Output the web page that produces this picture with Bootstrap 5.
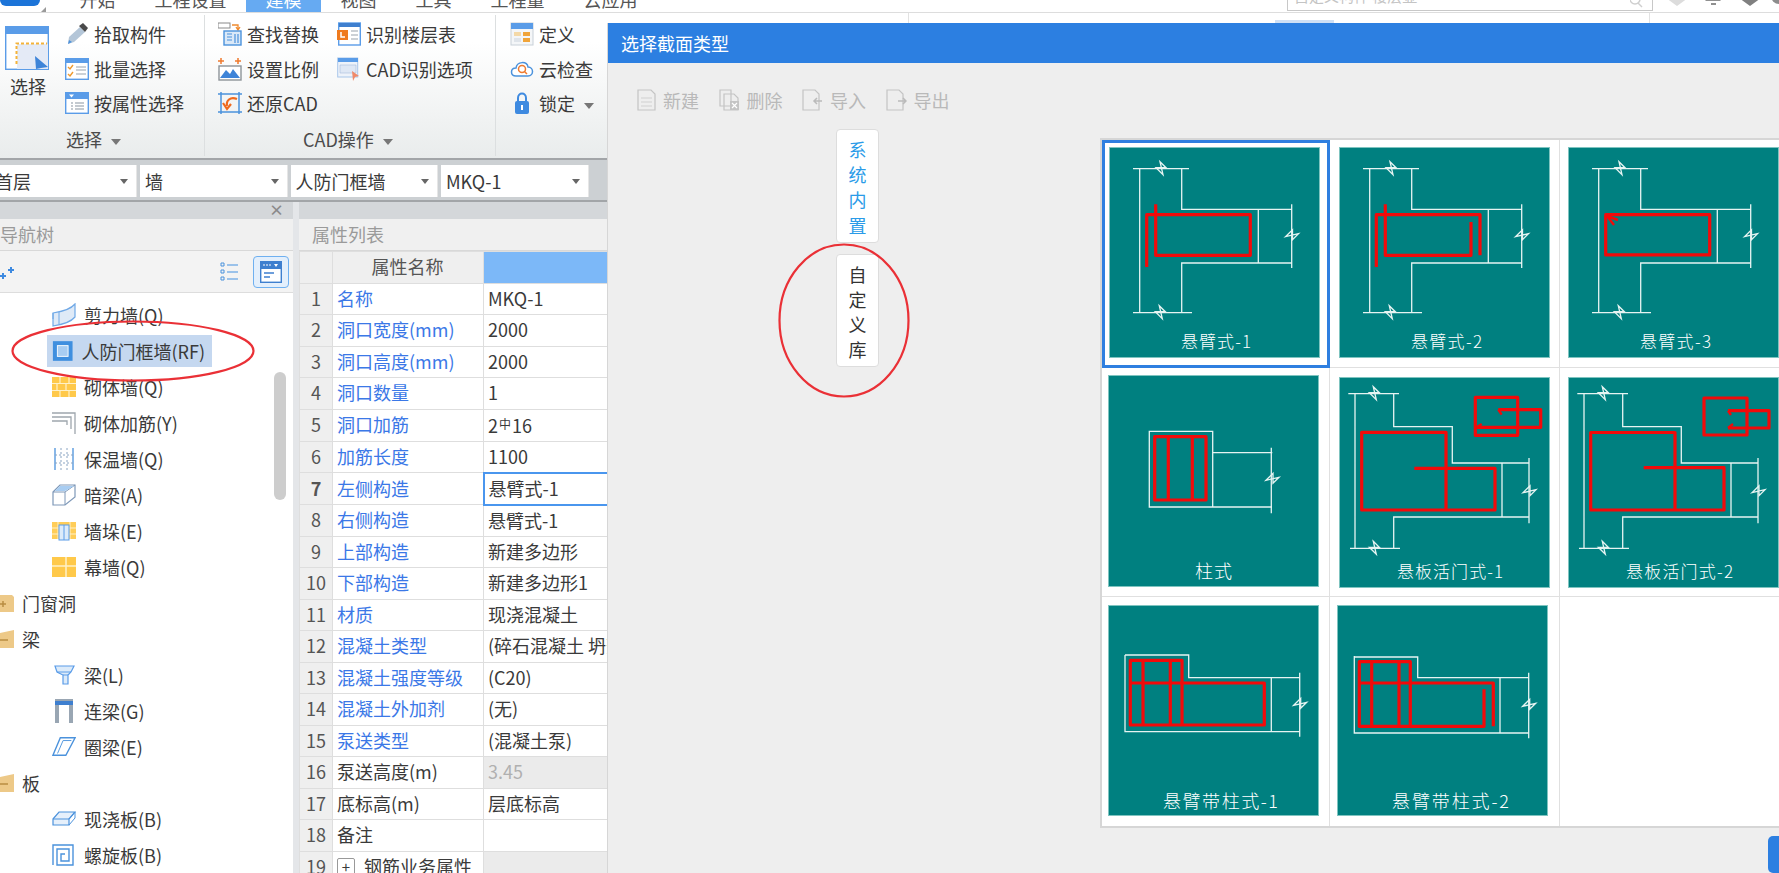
<!DOCTYPE html>
<html lang="zh-CN">
<head>
    <meta charset="UTF-8">
    <title>选择截面类型</title>
    <link href="https://cdn.jsdelivr.net/npm/bootstrap@5.3.0/dist/css/bootstrap.min.css" rel="stylesheet">
    <style>
        body {
            margin: 0;
            width: 1779px;
            height: 873px;
            overflow: hidden;
            position: relative;
            background: #fff;
            color: #3a3a3a;
            font-family: "Noto Sans CJK SC", "Liberation Sans", sans-serif;
            font-size: 18px;
            line-height: 24px;
        }

        /* top tab strip */
        .tabstrip { height: 13px; overflow: hidden; border-bottom: 1px solid #ddd; background: #fff; }
        .logo-box { width: 60px; flex: none; }
        .logo-blue { width: 40px; height: 6px; background: #1c74d8; border-radius: 0 0 8px 8px; }
        .logo-arrow { margin: 1px 0 0 41px; width: 0; height: 0; border-left: 5px solid transparent; border-bottom: 5px solid #9a9a9a; }
        .rtab { padding: 0 19.5px; margin-top: -13px; height: 26px; color: #555; }
        .rtab-on { background: #66aaf2; color: #fff; }
        .searchbox { width: 366px; height: 11px; margin-left: auto; border: 1px solid #c8c8c8; border-top: 0; overflow: hidden; font-size: 15px; line-height: 15px; color: #c4c4c4; padding: 0 8px 0 6px; flex: none; }
        .searchbox span { margin-top: -12px; }
        .top-ico { flex: none; margin-top: -6px; }
        .top-ico-one { margin-left: 12px; }
        .top-ico-two { margin-left: 14px; }
        .top-ico-three { margin-left: 15px; }
        .top-ico-four { margin-left: 8px; }

        /* ribbon */
        .ribbon { height: 145px; background: linear-gradient(#fff 20%, #e9ecec); }
        .rb-group { height: 141px; margin-top: 2px; border-right: 1px solid #dcdfe0; flex: none; }
        .rb-one { width: 205px; }
        .rb-two { width: 291px; padding-left: 13px; }
        .rb-three { width: 111px; padding-left: 14px; border-right: 0; }
        .rb-body { height: 106px; padding-top: 2px; }
        .rb-label { height: 35px; line-height: 36px; color: #4b4b4b; white-space: nowrap; }
        .rb-one .rb-label { padding-left: 66px; }
        .rb-two .rb-label { padding-left: 85px; }
        .rb-big { width: 65px; flex: none; padding: 9px 0 0 5px; }
        .rb-big span { display: block; width: 36px; margin: 4px 0 0 5px; white-space: nowrap; }
        .rb-col-one { width: 119px; flex: none; }
        .rb-item { height: 34.5px; gap: 5px; white-space: nowrap; }
        .rb-item svg { flex: none; }
        .caret-down { display: inline-block; width: 0; height: 0; margin-left: 9px; vertical-align: 2px; border-left: 5px solid transparent; border-right: 5px solid transparent; border-top: 6px solid #777; }
        .rb-rest { height: 10px; flex: none; border-right: 1px solid #e2e2e2; }
        .rb-rest-one { width: 302px; }
        .rb-rest-two { width: 741px; }
        .rb-rest-tab { width: 59px; height: 3px; margin: 7px 0 0 366px; background: #cfe0f5; }

        /* combo row */
        .combobar { height: 44px; background: #ccd0d3; border-top: 2px solid #a2a5a8; border-bottom: 2px solid #a2a5a8; padding-top: 5px; width: 607px; gap: 3px; }
        .combo { height: 32px; width: 147.5px; padding-left: 5px; background: #fff; line-height: 32px; border-right: 1px solid #e6e6e6; }
        .combo-first { width: 147px; margin-left: -10px; }
        .combo i { width: 0; height: 0; margin: 0 8px 0 auto; border-left: 4px solid transparent; border-right: 4px solid transparent; border-top: 5px solid #666; }

        /* panes below the combos */
        .panes { width: 607px; height: 671px; overflow: hidden; background: #e4e6e9; }
        .pane-nav { width: 293px; flex: none; background: #fff; }
        .pane-prop { width: 308px; margin-left: 6px; flex: none; background: #fff; }
        .pane-strip { height: 17px; background: #d4d7da; padding-right: 9px; font-size: 15px; line-height: 16px; color: #8a8a8a; font-weight: 700; }
        .pane-title { height: 32px; line-height: 30px; background: #f0f0f0; color: #9a9a9a; border-bottom: 1px solid #d8d8d8; }
        .pane-title-prop { padding-left: 13px; }
        .nav-tools { height: 42px; background: #f3f3f3; border-bottom: 1px solid #ddd; padding-right: 4px; }
        .nav-tools-on { width: 36px; height: 32px; background: #e3effc; border: 1px solid #6fb0f0; border-radius: 4px; margin-left: 15px; }
        .tree { padding-top: 4px; position: relative; }
        .tree-row { height: 36px; white-space: nowrap; }
        .tree-leaf { padding-left: 52px; gap: 8px; }
        .tree-head { gap: 8px; }
        .tree-sel { background: #c5d8f0; height: 32px; margin-left: 47px; padding: 0 7px 0 5px; gap: 8px; width: 165px; }
        .tree-scroll { position: absolute; right: 7px; top: 79px; width: 12px; height: 128px; background: #cdcdcd; border-radius: 6px; }

        .prop-table { table-layout: fixed; width: 308px; margin: 0; border-collapse: collapse; }
        .prop-table td { padding: 0 5px 2px 4px; height: 31.5px; line-height: 28px; border: 1px solid #dedede; white-space: nowrap; overflow: hidden; color: #3a3a3a; background: #fff; }
        .prop-table td:first-child { text-align: center; padding: 0 0 2px; background: #efefef; color: #555; }
        .prop-table tr td:last-child { padding-left: 4px; border-right: 0; }
        .prop-table .pname { color: #3b78e7; }
        .prop-table .phead { text-align: center; background: #efefef; color: #555; }
        .prop-table .pblue { background: #7cb8f8; }
        .prop-table .pgrey { background: #ebebeb; color: #b0b0b0; }
        .prop-table .pactive-no { background: #7cb8f8; color: #fff; font-weight: 700; }
        .prop-table .pactive { border: 2px solid #4a96ee; padding-left: 8px; }
        .steel { font-size: 12px; vertical-align: 4px; margin: 0 1px; }
        .plus-box { display: inline-block; width: 18px; height: 18px; line-height: 15px; margin: 0 9px 0 0; text-align: center; border: 1px solid #999; border-radius: 2px; font-size: 15px; vertical-align: 1px; }

        /* dialog sits over the main window */
        .dlg { position: absolute; left: 607px; top: 23px; width: 1172px; height: 850px; background: #eee; border-left: 1px solid #d6d6d6; }
        .dlg-head { height: 40px; background: #2c7fe1; color: #fff; line-height: 40px; padding-left: 13px; }
        .dlg-tools { height: 66px; padding: 25px 0 0 27px; color: #b9b9b9; }
        .dlg-tool { width: 83.5px; height: 24px; gap: 7px; flex: none; }
        .lib-tabs { width: 492px; flex: none; padding-left: 228px; gap: 11px; }
        .lib-tab { width: 43px; height: 113.5px; background: #fff; border: 1px solid #ddd; border-radius: 4px; text-align: center; padding-top: 7px; line-height: 25.2px; color: #333; }
        .lib-tab-on { color: #2a9be8; }
        .shape-grid { display: grid; grid-template-columns: 228px 230px 221px; grid-template-rows: 228px 229px 229px; width: 681px; margin-top: 9px; background: #fff; border-top: 2px solid #d6d6d6; border-left: 2px solid #d6d6d6; border-bottom: 2px solid #d6d6d6; }
        .shape-cell { border-right: 1px solid #e0e0e0; border-bottom: 1px solid #e0e0e0; }
        .shape-cell:nth-child(3n) { border-right: 0; padding-left: 8px; }
        .shape-cell:nth-child(n+7) { border-bottom: 0; }
        .shape-cell:nth-child(1) { padding: 7px 0 0 7px; }
        .shape-cell:nth-child(2) { padding: 7px 0 0 9px; }
        .shape-cell:nth-child(3) { padding-top: 7px; }
        .shape-cell:nth-child(4) { padding: 7px 0 0 6px; }
        .shape-cell:nth-child(5) { padding: 9px 0 0 9px; }
        .shape-cell:nth-child(6) { padding-top: 9px; }
        .shape-cell:nth-child(7) { padding: 8px 0 0 6px; }
        .shape-cell:nth-child(8) { padding: 8px 0 0 7px; }
        .shape-cell svg { display: block; }
        .shape-sel { outline: 3px solid #2f7fe0; outline-offset: -3px; }
        .tile-bg { fill: #008080; stroke: #7fc4c0; stroke-width: 1; }
        .wl { fill: none; stroke: #e6f4f2; stroke-width: 1.3; }
        .rb { fill: none; stroke: #f20a0a; stroke-width: 3.2; stroke-linejoin: round; }
        .rbt { fill: none; stroke: #f20a0a; stroke-width: 2.4; }
        .tile-label { fill: #fff; font-family: "Noto Sans CJK SC", sans-serif; font-size: 17px; font-weight: 300; }
        .tile-label-wide { font-size: 18px; }
        .dlg-ok { width: 30px; height: 37px; background: #2c7fe1; border-radius: 5px; margin: 8px 0 0 1160px; }

        .red-ring { position: absolute; fill: none; stroke: #ea3036; stroke-width: 2.2; }
    </style>
</head>
<body>
    <svg width="0" height="0" class="d-block">
        <defs>
            <path id="bh" d="M-1-7 5-1H-5L2 6Z"/>
            <path id="bv" d="M-6 2 1-5V5L7-1Z"/>
            <g id="wall-t" class="wl">
                <path d="M24 21.7H80M30.7 21.7V165.7M72.7 21.7V62.3H182.7M182.7 57.3V121M149.3 62.3V116M72.7 165.7V116H182.7M24 165.7H83"/>
                <use href="#bh" x="52" y="21.7"/><use href="#bh" x="51.3" y="165.7"/><use href="#bv" x="182.5" y="87.7"/>
            </g>
            <g id="wall-slab" class="wl">
                <path d="M9.3 16.7H60M16 16.7V171.3M54.7 16.7V49.7H113.3V86H190M190 81V146.3M163 86V140M54.7 171.3V140H190M11 171.3H61"/>
                <use href="#bh" x="35.3" y="16.7"/><use href="#bh" x="35.3" y="171.3"/><use href="#bv" x="190" y="113.7"/>
            </g>
        </defs>
    </svg>

    <!-- tab strip -->
    <div class="tabstrip d-flex">
        <div class="logo-box"><div class="logo-blue"></div><div class="logo-arrow"></div></div>
        <div class="rtab">开始</div>
        <div class="rtab">工程设置</div>
        <div class="rtab rtab-on">建模</div>
        <div class="rtab">视图</div>
        <div class="rtab">工具</div>
        <div class="rtab">工程量</div>
        <div class="rtab">云应用</div>
        <div class="searchbox d-flex justify-content-between"><span>自定义构件 楼层显</span>
            <svg width="14" height="10" viewBox="0 0 14 10"><circle cx="5" cy="-1" r="5" fill="none" stroke="#cfcfcf" stroke-width="1.500"/><path d="M8 3 12 7" stroke="#cfcfcf" stroke-width="1.500"/></svg>
        </div>
        <svg class="top-ico top-ico-one" width="24" height="14" viewBox="0 0 24 14"><path d="M1 4 12 12 23 4V0H1Z" fill="#dcdcdc"/></svg>
        <svg class="top-ico top-ico-two" width="20" height="14" viewBox="0 0 20 14"><path d="M2 7H18L15 4V0H5V4ZM8 9H13V11H8Z" fill="#909090"/></svg>
        <svg class="top-ico top-ico-three" width="24" height="14" viewBox="0 0 24 14"><path d="M1 0H23V4L12 12 1 4Z" fill="#808080"/></svg>
        <svg class="top-ico top-ico-four" width="9" height="14" viewBox="0 0 9 14"><circle cx="9" cy="2" r="8" fill="#8c8c8c"/></svg>
    </div>

    <!-- ribbon -->
    <div class="ribbon d-flex">
        <div class="rb-group rb-one">
            <div class="rb-body d-flex">
                <div class="rb-big">
                    <svg width="44" height="44" viewBox="0 0 44 44">
                        <rect x=".7" y=".7" width="42.6" height="42.6" fill="#fff" stroke="#5a9ce8" stroke-width="1.4"/>
                        <rect x="1" y="1" width="42" height="7" fill="#5a9ce8"/>
                        <rect x="12" y="18" width="31" height="25" fill="#e4eaf6"/>
                        <path d="M11.500 38V17.500H42" fill="none" stroke="#f4b33a" stroke-width="2" stroke-dasharray="3 2"/>
                        <path d="M30 30 43 41 36 42 31 43Z" fill="#3e84d8"/>
                    </svg>
                    <span>选择</span>
                </div>
                <div>
                    <div class="rb-item d-flex align-items-center">
                        <svg width="24" height="24" viewBox="0 0 24 24"><path d="M3 22 4 15 15 5 20 10 9 20Z" fill="#b4c6d8"/><path d="M3 22 4 18 7 20Z" fill="#4d92dc"/><path d="M14 4 18 1 23 6 20 10Z" fill="#4a4a4a"/></svg>
                        <span>拾取构件</span>
                    </div>
                    <div class="rb-item d-flex align-items-center">
                        <svg width="24" height="24" viewBox="0 0 24 24"><rect x=".7" y="1.700" width="22.600" height="20.600" fill="#fff" stroke="#5a9ce8" stroke-width="1.4"/><rect x="1" y="2" width="22" height="4" fill="#5a9ce8"/><path d="M3 10 5 12 8 8M3 17 5 19 8 15" fill="none" stroke="#ef9a2e" stroke-width="1.400"/><path d="M11 10H21M11 13H21M11 17H21" stroke="#9aa4ae" stroke-width="1.200"/></svg>
                        <span>批量选择</span>
                    </div>
                    <div class="rb-item d-flex align-items-center">
                        <svg width="24" height="24" viewBox="0 0 24 24"><rect x=".7" y="1.700" width="22.600" height="20.600" fill="#fff" stroke="#5a9ce8" stroke-width="1.4"/><rect x="1" y="2" width="22" height="6" fill="#5a9ce8"/><path d="M4 3.500H9L6.500 6.500Z" fill="#fff"/><path d="M6 12H8M6 15H8M6 18H8M10 12H19M10 15H19M10 18H19" stroke="#8a96a2" stroke-width="1.200"/></svg>
                        <span>按属性选择</span>
                    </div>
                </div>
            </div>
            <div class="rb-label">选择<span class="caret-down"></span></div>
        </div>

        <div class="rb-group rb-two">
            <div class="rb-body d-flex">
                <div class="rb-col-one">
                    <div class="rb-item d-flex align-items-center">
                        <svg width="24" height="24" viewBox="0 0 24 24"><rect x="0" y="1" width="12" height="5" fill="#fff" stroke="#8a8a8a"/><path d="M14 3H20V7M18 5 20 8 22 5" fill="none" stroke="#ef8a2e" stroke-width="1.300"/><rect x="6" y="9" width="17" height="14" fill="#dbe9f8" stroke="#4b92dc" stroke-width="1.400"/><path d="M9 12H14M9 15H14M9 18H14M17 12V21M20 12V21" stroke="#4b92dc" stroke-width="1.200"/></svg>
                        <span>查找替换</span>
                    </div>
                    <div class="rb-item d-flex align-items-center">
                        <svg width="24" height="24" viewBox="0 0 24 24"><path d="M3 1V7M0 4H6M20 1V7M17 4H23" fill="none" stroke="#ef7a2e" stroke-width="1.500"/><rect x="1" y="9" width="22" height="14" fill="#fff" stroke="#8e9499" stroke-width="1.400"/><path d="M2 21 8 13 12 17 15 12 22 21Z" fill="#3e84d8"/></svg>
                        <span>设置比例</span>
                    </div>
                    <div class="rb-item d-flex align-items-center">
                        <svg width="24" height="24" viewBox="0 0 24 24"><path d="M3 1V23M21 1V23M0 3H24M0 21H24" stroke="#4b92dc" stroke-width="1.500"/><path d="M19 8C12 5 8 10 9 15M5 12 9 18 13 13" fill="none" stroke="#ef6a1e" stroke-width="2.200"/></svg>
                        <span>还原CAD</span>
                    </div>
                </div>
                <div>
                    <div class="rb-item d-flex align-items-center">
                        <svg width="24" height="24" viewBox="0 0 24 24"><rect x="1.700" y="1" width="21.600" height="22" fill="#fff" stroke="#5a9ce8" stroke-width="1.400"/><rect x="2" y="1" width="21" height="4" fill="#3e7fcf"/><rect x="0" y="8" width="11" height="10" fill="#ef7a1e"/><path d="M4 10V15H8" fill="none" stroke="#fff" stroke-width="1.500"/><path d="M14 9H21M14 13H21M14 17H21" stroke="#9aa4ae" stroke-width="1.200"/></svg>
                        <span>识别楼层表</span>
                    </div>
                    <div class="rb-item d-flex align-items-center">
                        <svg width="24" height="24" viewBox="0 0 24 24"><rect x=".7" y="1" width="20" height="19" fill="#eef3fa" stroke="#a8c6ea"/><rect x="1" y="1" width="20" height="4" fill="#5a9ce8"/><path d="M3 8H19V16H3Z" fill="#dfe8f5" stroke="#a8bedc" stroke-width=".6"/><path d="M15 14 22 19 18 20 16 24Z" fill="#f08a6a"/></svg>
                        <span>CAD识别选项</span>
                    </div>
                </div>
            </div>
            <div class="rb-label">CAD操作<span class="caret-down"></span></div>
        </div>

        <div class="rb-group rb-three">
            <div class="rb-body">
                <div class="rb-item d-flex align-items-center">
                    <svg width="24" height="24" viewBox="0 0 24 24"><rect x="1" y="1" width="22" height="22" fill="#f4f6f8" stroke="#c8d0d8"/><rect x="1" y="1" width="22" height="6" fill="#5a9ce8"/><rect x="4" y="10" width="7" height="4" fill="#f4d9a8"/><rect x="13" y="10" width="7" height="4" fill="#f0a43a"/><rect x="4" y="16" width="7" height="4" fill="#dfe4ea"/><rect x="13" y="16" width="7" height="4" fill="#f0a43a"/></svg>
                    <span>定义</span>
                </div>
                <div class="rb-item d-flex align-items-center">
                    <svg width="24" height="24" viewBox="0 0 24 24"><path d="M6 19C0 19 0 11 6 11 7 4 17 4 18 10 24 10 24 19 18 19Z" fill="#fff" stroke="#4b92dc" stroke-width="1.500"/><circle cx="12" cy="12" r="3.500" fill="none" stroke="#ef7a2e" stroke-width="1.500"/><path d="M14.500 14.500 17 17" stroke="#ef7a2e" stroke-width="1.500"/></svg>
                    <span>云检查</span>
                </div>
                <div class="rb-item d-flex align-items-center">
                    <svg width="24" height="24" viewBox="0 0 24 24"><path d="M8 10V7C8 1 16 1 16 7V10" fill="none" stroke="#3e8ae0" stroke-width="2"/><rect x="5" y="10" width="14" height="13" rx="2" fill="#3e8ae0"/><rect x="11" y="14" width="2" height="5" fill="#fff"/></svg>
                    <span>锁定<span class="caret-down"></span></span>
                </div>
            </div>
            <div class="rb-label"></div>
        </div>
        <div class="rb-rest rb-rest-one"></div>
        <div class="rb-rest rb-rest-two"><div class="rb-rest-tab"></div></div>
    </div>

    <!-- combo row -->
    <div class="combobar d-flex">
        <div class="combo combo-first d-flex align-items-center">首层<i></i></div>
        <div class="combo d-flex align-items-center">墙<i></i></div>
        <div class="combo d-flex align-items-center">人防门框墙<i></i></div>
        <div class="combo d-flex align-items-center">MKQ-1<i></i></div>
    </div>

    <div class="panes d-flex">
        <!-- navigation tree -->
        <div class="pane-nav">
            <div class="pane-strip text-end">×</div>
            <div class="pane-title">导航树</div>
            <div class="nav-tools d-flex align-items-center justify-content-end">
                <svg class="me-auto" width="16" height="16" viewBox="0 0 16 16"><path d="M3 9V15M0 12H6M11 3V9M8 6H14" stroke="#3e8ae0" stroke-width="2"/></svg>
                <svg width="18" height="20" viewBox="0 0 18 20"><path d="M7 3H18M7 10H18M7 17H18" stroke="#7fb2e8" stroke-width="1.300"/><path d="M1 1H4V4H1ZM1 8H4V11H1ZM1 15H4V18H1Z" fill="none" stroke="#4b92dc"/></svg>
                <div class="nav-tools-on d-flex align-items-center justify-content-center">
                    <svg width="22" height="22" viewBox="0 0 22 22"><rect x=".7" y=".7" width="20.600" height="20.600" fill="#fff" stroke="#3e7fcf" stroke-width="1.400"/><rect x="1" y="1" width="20" height="7" fill="#3e7fcf"/><path d="M4 3V5M7 3V5M10 3V5" stroke="#fff"/><path d="M14 3H18L16 6Z" fill="#fff"/><path d="M4 12H14M4 16H10" stroke="#3e7fcf" stroke-width="1.400"/></svg>
                </div>
            </div>
            <div class="tree">
                <div class="tree-row tree-leaf d-flex align-items-center">
                    <svg width="24" height="24" viewBox="0 0 24 24"><path d="M1 10C8 9 18 7 23 1V14C18 20 8 22 1 23Z" fill="#dfeaf7" stroke="#6fa8e6" stroke-width="1.200"/><path d="M1 10V16M7 9V21" stroke="#6fa8e6"/></svg>
                    <span>剪力墙(Q)</span>
                </div>
                <div class="tree-row d-flex align-items-center">
                    <div class="tree-sel d-flex align-items-center">
                        <svg width="24" height="24" viewBox="0 0 24 24"><rect x="1" y="1" width="22" height="22" fill="#3f8fdf"/><rect x="6" y="6" width="12" height="12" fill="#a8cdf2" stroke="#fff" stroke-width="1"/></svg>
                        <span>人防门框墙(RF)</span>
                    </div>
                </div>
                <div class="tree-row tree-leaf d-flex align-items-center">
                    <svg width="24" height="20" viewBox="0 0 24 20"><rect width="24" height="20" fill="#ffc94a"/><path d="M0 6.500H24M0 13.500H24M8 0V6.500M17 0V6.500M5 6.500V13.500M14 6.500V13.500M8 13.500V20M17 13.500V20" stroke="#fff1c8" stroke-width="1.200"/></svg>
                    <span>砌体墙(Q)</span>
                </div>
                <div class="tree-row tree-leaf d-flex align-items-center">
                    <svg width="24" height="24" viewBox="0 0 24 24"><path d="M0 2H23V23M0 6H19V18M0 10H15V14" fill="none" stroke="#9ea6ad" stroke-width="1.300"/></svg>
                    <span>砌体加筋(Y)</span>
                </div>
                <div class="tree-row tree-leaf d-flex align-items-center">
                    <svg width="24" height="24" viewBox="0 0 24 24"><path d="M3 1V23M21 1V23" stroke="#4b92dc" stroke-width="1.300"/><path d="M9 1V23M15 1V23M3 8H21M3 16H21" stroke="#8aa4c2" stroke-dasharray="2 2"/></svg>
                    <span>保温墙(Q)</span>
                </div>
                <div class="tree-row tree-leaf d-flex align-items-center">
                    <svg width="24" height="24" viewBox="0 0 24 24"><path d="M1 9 8 2H23V14L13 22H1Z" fill="#fff" stroke="#7e98b8" stroke-width="1.200"/><path d="M1 9H13L23 2M13 9V22" fill="none" stroke="#7e98b8"/><path d="M8 3H22L13 8H3Z" fill="#a8cdf2"/></svg>
                    <span>暗梁(A)</span>
                </div>
                <div class="tree-row tree-leaf d-flex align-items-center">
                    <svg width="24" height="20" viewBox="0 0 24 20"><rect width="24" height="17" y="1" fill="#ffcd58"/><path d="M6 1V18M18 1V18M0 7H24M0 13H24" stroke="#fff1c8"/><rect x="7" y="4" width="10" height="15" fill="#dcebfa" stroke="#5a9ce8"/><path d="M12 4V19" stroke="#5a9ce8"/></svg>
                    <span>墙垛(E)</span>
                </div>
                <div class="tree-row tree-leaf d-flex align-items-center">
                    <svg width="24" height="20" viewBox="0 0 24 20"><rect width="24" height="20" fill="#ffc94a"/><path d="M0 9H24M14 0V20" stroke="#fff1c8" stroke-width="1.500"/></svg>
                    <span>幕墙(Q)</span>
                </div>
                <div class="tree-row tree-head d-flex align-items-center">
                    <svg width="14" height="20" viewBox="0 0 14 20"><path d="M0 2H12L14 4V19H0Z" fill="#edc988"/><path d="M0 11H6M3 8V14" stroke="#b98d42" stroke-width="1.500"/></svg>
                    <span>门窗洞</span>
                </div>
                <div class="tree-row tree-head d-flex align-items-center">
                    <svg width="14" height="20" viewBox="0 0 14 20"><path d="M0 4 14 1V19H0Z" fill="#edc988"/><path d="M0 11H8" stroke="#b98d42" stroke-width="1.500"/></svg>
                    <span>梁</span>
                </div>
                <div class="tree-row tree-leaf d-flex align-items-center">
                    <svg width="24" height="24" viewBox="0 0 24 24"><path d="M3 3H22L19 9 16 12V21H11V12L5 9Z" fill="#dcebfa" stroke="#5a9ce8" stroke-width="1.200"/><path d="M5 9H19M11 12 16 12" stroke="#5a9ce8"/></svg>
                    <span>梁(L)</span>
                </div>
                <div class="tree-row tree-leaf d-flex align-items-center">
                    <svg width="24" height="26" viewBox="0 0 24 26"><path d="M3 1H21V25H17V7H7V25H3Z" fill="#99a6b3"/><rect x="3" y="3" width="18" height="4" fill="#3e7fcf"/></svg>
                    <span>连梁(G)</span>
                </div>
                <div class="tree-row tree-leaf d-flex align-items-center">
                    <svg width="24" height="24" viewBox="0 0 26 24"><path d="M1 21 9 2H25L15 21Z" fill="#fff" stroke="#4b92dc" stroke-width="1.500"/><path d="M6 19 12 5H21" fill="none" stroke="#4b92dc"/></svg>
                    <span>圈梁(E)</span>
                </div>
                <div class="tree-row tree-head d-flex align-items-center">
                    <svg width="14" height="20" viewBox="0 0 14 20"><path d="M0 4 14 1V19H0Z" fill="#edc988"/><path d="M0 11H8" stroke="#b98d42" stroke-width="1.500"/></svg>
                    <span>板</span>
                </div>
                <div class="tree-row tree-leaf d-flex align-items-center">
                    <svg width="24" height="16" viewBox="0 0 24 16"><path d="M1 8 7 1H23L17 8V14H1Z" fill="#e6f0fb" stroke="#4b92dc" stroke-width="1.200"/><path d="M1 8H17L23 1V7L17 14" fill="none" stroke="#4b92dc"/></svg>
                    <span>现浇板(B)</span>
                </div>
                <div class="tree-row tree-leaf d-flex align-items-center">
                    <svg width="24" height="22" viewBox="0 0 24 22"><path d="M1 21V1H21V21H5V5H17V17H9V10H13" fill="none" stroke="#4b92dc" stroke-width="1.400"/></svg>
                    <span>螺旋板(B)</span>
                </div>
                <div class="tree-scroll"></div>
            </div>
        </div>

        <!-- property list -->
        <div class="pane-prop">
            <div class="pane-strip"></div>
            <div class="pane-title pane-title-prop">属性列表</div>
            <table class="prop-table">
                <colgroup><col style="width:33px"><col style="width:151px"><col style="width:124px"></colgroup>
                <tr><td></td><td class="phead">属性名称</td><td class="pblue"></td></tr>
                <tr><td>1</td><td class="pname">名称</td><td>MKQ-1</td></tr>
                <tr><td>2</td><td class="pname">洞口宽度(mm)</td><td>2000</td></tr>
                <tr><td>3</td><td class="pname">洞口高度(mm)</td><td>2000</td></tr>
                <tr><td>4</td><td class="pname">洞口数量</td><td>1</td></tr>
                <tr><td>5</td><td class="pname">洞口加筋</td><td>2<span class="steel">中</span>16</td></tr>
                <tr><td>6</td><td class="pname">加筋长度</td><td>1100</td></tr>
                <tr><td class="pactive-no">7</td><td class="pname">左侧构造</td><td class="pactive">悬臂式-1</td></tr>
                <tr><td>8</td><td class="pname">右侧构造</td><td>悬臂式-1</td></tr>
                <tr><td>9</td><td class="pname">上部构造</td><td>新建多边形</td></tr>
                <tr><td>10</td><td class="pname">下部构造</td><td>新建多边形1</td></tr>
                <tr><td>11</td><td class="pname">材质</td><td>现浇混凝土</td></tr>
                <tr><td>12</td><td class="pname">混凝土类型</td><td>(碎石混凝土 坍落度)</td></tr>
                <tr><td>13</td><td class="pname">混凝土强度等级</td><td>(C20)</td></tr>
                <tr><td>14</td><td class="pname">混凝土外加剂</td><td>(无)</td></tr>
                <tr><td>15</td><td class="pname">泵送类型</td><td>(混凝土泵)</td></tr>
                <tr><td>16</td><td>泵送高度(m)</td><td class="pgrey">3.45</td></tr>
                <tr><td>17</td><td>底标高(m)</td><td>层底标高</td></tr>
                <tr><td>18</td><td>备注</td><td></td></tr>
                <tr><td>19</td><td><span class="plus-box">+</span>钢筋业务属性</td><td class="pgrey"></td></tr>
            </table>
        </div>
    </div>

    <svg class="red-ring" style="left:11px;top:320px" width="244" height="62" viewBox="0 0 244 62"><ellipse cx="122" cy="31" rx="120.500" ry="29.500"/></svg>

    <!-- section type dialog -->
    <div class="dlg">
        <div class="dlg-head">选择截面类型</div>
        <div class="dlg-tools d-flex">
            <div class="dlg-tool d-flex align-items-center">
                <svg width="21" height="22" viewBox="0 0 21 22"><path d="M3 1H16L20 5V21H3Z" fill="none" stroke="#c4c4c4" stroke-width="1.200"/><path d="M6 9H17M6 13H17M6 17H17" stroke="#d0d0d0"/></svg><span>新建</span>
            </div>
            <div class="dlg-tool d-flex align-items-center">
                <svg width="21" height="22" viewBox="0 0 21 22"><path d="M1 1H12V17H1ZM5 5H15L19 9V21H5Z" fill="#eee" stroke="#c4c4c4" stroke-width="1.200"/><path d="M11 12H20V21H11Z" fill="#c4c4c4"/><path d="M13 14 18 19M18 14 13 19" stroke="#fff" stroke-width="1.200"/></svg><span>删除</span>
            </div>
            <div class="dlg-tool d-flex align-items-center">
                <svg width="21" height="22" viewBox="0 0 21 22"><path d="M1 1H13L17 5V21H1Z" fill="none" stroke="#c4c4c4" stroke-width="1.200"/><path d="M20 12H12M15 9 12 12 15 15" fill="none" stroke="#bbb" stroke-width="1.500"/></svg><span>导入</span>
            </div>
            <div class="dlg-tool d-flex align-items-center">
                <svg width="21" height="22" viewBox="0 0 21 22"><path d="M1 1H13L17 5V21H1Z" fill="none" stroke="#c4c4c4" stroke-width="1.200"/><path d="M12 12H20M17 9 20 12 17 15" fill="none" stroke="#bbb" stroke-width="1.500"/></svg><span>导出</span>
            </div>
        </div>
        <div class="d-flex">
            <div class="lib-tabs d-flex flex-column">
                <div class="lib-tab lib-tab-on">系<br>统<br>内<br>置</div>
                <div class="lib-tab">自<br>定<br>义<br>库</div>
            </div>
            <div class="shape-grid">
                <div class="shape-cell shape-sel">
                    <svg width="211" height="211" viewBox="0 0 211 211">
                        <rect class="tile-bg" x=".5" y=".5" width="210" height="210"/>
                        <use href="#wall-t"/>
                        <path class="rb" d="M37.700 120V67.700H141.300V108.300H46.700V57.300"/>
                        <text class="tile-label" x="72" y="201" textLength="70">悬臂式-1</text>
                    </svg>
                </div>
                <div class="shape-cell">
                    <svg width="211" height="211" viewBox="0 0 211 211">
                        <rect class="tile-bg" x=".5" y=".5" width="210" height="210"/>
                        <use href="#wall-t"/>
                        <path class="rb" d="M37.300 120V67.700H141V108.300M46.300 57.300V108.300H132V75"/>
                        <text class="tile-label" x="72" y="201" textLength="71">悬臂式-2</text>
                    </svg>
                </div>
                <div class="shape-cell">
                    <svg width="211" height="211" viewBox="0 0 211 211">
                        <rect class="tile-bg" x=".5" y=".5" width="210" height="210"/>
                        <use href="#wall-t"/>
                        <path class="rb" d="M37.700 67.700H141.700V107.900H37.700Z"/>
                        <path class="rbt" d="M39 69 50 73M39 69 46 78"/>
                        <text class="tile-label" x="72" y="201" textLength="71">悬臂式-3</text>
                    </svg>
                </div>
                <div class="shape-cell">
                    <svg width="211" height="212" viewBox="0 0 211 212">
                        <rect class="tile-bg" x=".5" y=".5" width="210" height="211"/>
                        <g class="wl"><path d="M41.300 56.300H104.700V132H41.300ZM104.700 77.700H164.300M104.700 132H164M163.300 72.700V138.300"/><use href="#bv" x="164" y="103.300"/></g>
                        <path class="rb" d="M46.700 61.700H98V125H46.700ZM60.300 61.700V125M84.300 61.700V125"/>
                        <text class="tile-label tile-label-wide" x="87" y="203" textLength="37">柱式</text>
                    </svg>
                </div>
                <div class="shape-cell">
                    <svg width="211" height="211" viewBox="0 0 211 211">
                        <rect class="tile-bg" x=".5" y=".5" width="210" height="210"/>
                        <use href="#wall-slab"/>
                        <path class="rb" d="M75.300 91.300H156V133H22.700V55.300H107V133M136.300 20.300H178.700V58.300H136.300ZM159.300 32.700H201.700V50.300H137.700"/>
                        <path class="rbt" d="M159.300 32.700 162.700 37.700M137.700 50.300 142.700 47"/>
                        <text class="tile-label" x="58" y="201" textLength="106">悬板活门式-1</text>
                    </svg>
                </div>
                <div class="shape-cell">
                    <svg width="211" height="211" viewBox="0 0 211 211">
                        <rect class="tile-bg" x=".5" y=".5" width="210" height="210"/>
                        <use href="#wall-slab"/>
                        <path class="rb" d="M75.700 90.700H156V133H22.700V55.500H107V133M136 21H179V58H136ZM160 33.700H201V51H160"/>
                        <path class="rbt" d="M160 33.700 163 38M160 51 165 47"/>
                        <text class="tile-label" x="58" y="201" textLength="107">悬板活门式-2</text>
                    </svg>
                </div>
                <div class="shape-cell">
                    <svg width="211" height="211" viewBox="0 0 211 211">
                        <rect class="tile-bg" x=".5" y=".5" width="210" height="210"/>
                        <g class="wl"><path d="M17 50H80.700V72.700H191.700M17 50V126.700H191.700M191.700 67.700V131.700M163.300 72.700V126.700"/><use href="#bv" x="191.700" y="98.300"/></g>
                        <path class="rb" d="M22.300 55.300H74V120H22.300ZM35 55.300V120M62.300 55.300V120M22.300 78H156.300V120H22.300"/>
                        <text class="tile-label tile-label-wide" x="55" y="203" textLength="115">悬臂带柱式-1</text>
                    </svg>
                </div>
                <div class="shape-cell">
                    <svg width="211" height="211" viewBox="0 0 211 211">
                        <rect class="tile-bg" x=".5" y=".5" width="210" height="210"/>
                        <g class="wl"><path d="M17.300 52H80.700V72.700H191.700M17.300 51V128H191.700M191.700 67.700V133.300M163 72.700V128"/><use href="#bv" x="191.700" y="99.300"/></g>
                        <path class="rb" d="M22.300 56.700H73.300V121.300H22.300ZM34.700 56.700V121.300M62 56.700V121.300M22.300 78H156.300V121.300M22.300 121.300H147V84.300"/>
                        <text class="tile-label tile-label-wide" x="55" y="203" textLength="117">悬臂带柱式-2</text>
                    </svg>
                </div>
                <div class="shape-cell"></div>
            </div>
        </div>
        <div class="dlg-ok"></div>
    </div>

    <svg class="red-ring" style="left:778px;top:243px" width="132" height="155" viewBox="0 0 132 155"><ellipse cx="66" cy="77.500" rx="64.500" ry="76"/></svg>

    <script src="https://cdn.jsdelivr.net/npm/bootstrap@5.3.0/dist/js/bootstrap.bundle.min.js"></script>
</body>
</html>
